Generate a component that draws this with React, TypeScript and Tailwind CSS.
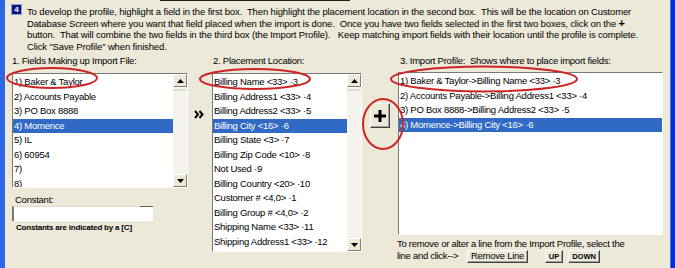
import React from 'react';

const importFields = [
  '1) Baker & Taylor',
  '2) Accounts Payable',
  '3) PO Box 8888',
  '4) Momence',
  '5) IL',
  '6) 60954',
  '7)',
  '8)',
];

const locations = [
  'Billing Name <33> ·3',
  'Billing Address1 <33> ·4',
  'Billing Address2 <33> ·5',
  'Billing City <16> ·6',
  'Billing State <3> ·7',
  'Billing Zip Code <10> ·8',
  'Not Used ·9',
  'Billing Country <20> ·10',
  'Customer # <4,0> ·1',
  'Billing Group # <4,0> ·2',
  'Shipping Name <33> ·11',
  'Shipping Address1 <33> ·12',
];

const profile = [
  '1) Baker & Taylor->Billing Name <33> ·3',
  '2) Accounts Payable->Billing Address1 <33> ·4',
  '3) PO Box 8888->Billing Address2 <33> ·5',
  '4) Momence->Billing City <16> ·6',
];

function Arrow({ down }: { down?: boolean }) {
  return (
    <div className="flex h-[13px] w-full shrink-0 items-center justify-center border border-t-white border-l-white border-r-[#808080] border-b-[#808080] bg-[#ece9d8]">
      <svg width="7" height="4" viewBox="0 0 7 4">
        <polygon points={down ? '0,0 7,0 3.5,4' : '0,4 7,4 3.5,0'} fill="#000" />
      </svg>
    </div>
  );
}

function ScrollBar() {
  return (
    <div className="flex w-[14px] shrink-0 flex-col bg-[#f4f3ee]">
      <Arrow />
      <div className="mt-[2px] h-[2px] w-full bg-[#e2dfd4]" />
      <div className="flex-1" />
      <Arrow down />
    </div>
  );
}

function Rows({ items, selected, pad }: { items: string[]; selected: number; pad: string }) {
  return (
    <div className="flex min-w-0 flex-1 flex-col overflow-hidden pt-px">
      {items.map((item, i) => (
        <div
          key={i}
          className={`h-[14.5px] shrink-0 whitespace-pre leading-[14.5px] ${pad} ${
            i === selected ? 'bg-[#316ac5] text-white' : ''
          }`}
        >
          {item}
        </div>
      ))}
    </div>
  );
}

function RaisedButton({ children, className }: { children: React.ReactNode; className: string }) {
  return (
    <div
      className={`flex shrink-0 items-center justify-center border border-t-white border-l-white border-r-[#404040] border-b-[#404040] bg-[#ece9d8] shadow-[inset_-1px_-1px_0_#a0a0a0] ${className}`}
    >
      {children}
    </div>
  );
}

export default function App() {
  return (
    <div className="relative flex h-[268px] w-[675px] overflow-hidden bg-[#ece9d8] font-['Liberation_Sans',Arial,sans-serif] text-[9.5px] tracking-[-0.25px] text-black">
      {/* window frame left */}
      <div className="w-[5px] shrink-0 bg-[#2f66e8]" />

      <div className="flex min-w-0 flex-1 flex-col">
        <div className="ml-[155px] h-px w-[190px] bg-[#202020]" />

        {/* step 4 instructions */}
        <div className="mt-[3px] flex items-start">
          <div className="ml-[6px] flex h-[11px] w-[11px] shrink-0 items-center justify-center border border-[#8c9bd6] bg-[#10127e] text-[8px] font-bold leading-none tracking-normal text-white">
            4
          </div>
          <div className="ml-[5px] mt-[2px] leading-[11.5px] tracking-[-0.14px]">
            <div className="whitespace-pre">
              To develop the profile, highlight a field in the first box.  Then highlight the placement location in the second box.  This will be the location on Customer
            </div>
            <div className="whitespace-pre">
              Database Screen where you want that field placed when the import is done.  Once you have two fields selected in the first two boxes, click on the <b className="text-[11px]">+</b>
            </div>
            <div className="whitespace-pre">
              button.  That will combine the two fields in the third box (the Import Profile).   Keep matching import fields with their location until the profile is complete.
            </div>
            <div className="whitespace-pre">Click "Save Profile" when finished.</div>
          </div>
        </div>

        {/* three boxes */}
        <div className="mt-[3px] flex items-start">
          {/* box 1 */}
          <div className="ml-[7px] flex w-[176px] shrink-0 flex-col">
            <div className="h-[18px] whitespace-pre leading-[11.5px]">1. Fields Making up Import File:</div>
            <div className="flex h-[115px] border border-t-[#7a7a7a] border-l-[#7a7a7a] border-r-white border-b-white bg-white">
              <Rows items={importFields} selected={3} pad="pl-px" />
              <ScrollBar />
            </div>
            <div className="mt-[6px] pl-[3px] leading-[11.5px]">Constant:</div>
            <div className="flex h-[15px] w-[141px] items-start justify-end border-l-2 border-t border-l-[#7a7a7a] border-t-[#dcd9cd] bg-white">
              <div className="-mt-px h-px w-[13px] bg-[#606060]" />
            </div>
            <div className="mt-[2px] whitespace-pre pl-[4px] text-[8px] font-bold leading-[9px] tracking-[-0.2px]">
              Constants are indicated by a [C]
            </div>
          </div>

          {/* chevrons */}
          <div className="flex w-[24px] shrink-0 flex-col">
            <svg className="ml-[6px] mt-[55px]" width="10" height="9" viewBox="0 0 10 9">
              <polyline points="1,1 4,4.5 1,8" fill="none" stroke="#000" strokeWidth="2" />
              <polyline points="5.5,1 8.5,4.5 5.5,8" fill="none" stroke="#000" strokeWidth="2" />
            </svg>
          </div>

          {/* box 2 */}
          <div className="flex w-[150px] shrink-0 flex-col">
            <div className="h-[18px] whitespace-pre pl-px leading-[11.5px]">2. Placement Location:</div>
            <div className="flex h-[179px] border border-t-[#7a7a7a] border-l-[#7a7a7a] border-r-white border-b-white bg-white">
              <Rows items={locations} selected={3} pad="pl-px" />
              <ScrollBar />
            </div>
          </div>

          {/* plus button */}
          <div className="flex w-[36px] shrink-0 flex-col">
            <RaisedButton className="ml-[8px] mt-[48px] h-[25px] w-[20px]">
              <svg width="12" height="12" viewBox="0 0 12 12">
                <rect x="4.5" y="0" width="3" height="12" fill="#000" />
                <rect x="0" y="4.5" width="12" height="3" fill="#000" />
              </svg>
            </RaisedButton>
          </div>

          {/* box 3 */}
          <div className="flex w-[265px] shrink-0 flex-col">
            <div className="h-[17px] whitespace-pre pl-[2px] leading-[11.5px]">3. Import Profile:  Shows where to place import fields:</div>
            <div className="flex h-[163px] border border-t-[#7a7a7a] border-l-[#7a7a7a] border-r-white border-b-white bg-white">
              <Rows items={profile} selected={3} pad="pl-px" />
            </div>
            <div className="-ml-px mt-[3px] whitespace-pre leading-[11.5px] tracking-[-0.28px]">
              To remove or alter a line from the Import Profile, select the
            </div>
            <div className="-ml-px flex h-[14px] items-center">
              <div className="w-[70px] shrink-0 whitespace-pre tracking-[-0.3px]">line and click--&gt;</div>
              <RaisedButton className="h-[13px] w-[61px]">Remove Line</RaisedButton>
              <RaisedButton className="ml-[17px] h-[13px] w-[18px] text-[7.5px] font-bold tracking-normal">UP</RaisedButton>
              <RaisedButton className="ml-[5px] h-[13px] w-[32px] text-[7.5px] font-bold tracking-normal">DOWN</RaisedButton>
            </div>
          </div>
        </div>
      </div>

      {/* window frame right */}
      <div className="flex w-[5px] shrink-0">
        <div className="w-px bg-[#3f6fe4]" />
        <div className="flex-1 bg-[#0a2ccc]" />
      </div>

      {/* red annotation circles */}
      <svg className="pointer-events-none absolute left-0 top-0" width="675" height="268" viewBox="0 0 675 268">
        <g fill="none" stroke="#cf2424" strokeWidth="2">
          <ellipse cx="52" cy="78" rx="45" ry="10" />
          <ellipse cx="255" cy="79" rx="55" ry="10" />
          <ellipse cx="484" cy="79" rx="93" ry="12.5" />
          <ellipse cx="383" cy="124" rx="20" ry="25" />
        </g>
      </svg>
    </div>
  );
}
